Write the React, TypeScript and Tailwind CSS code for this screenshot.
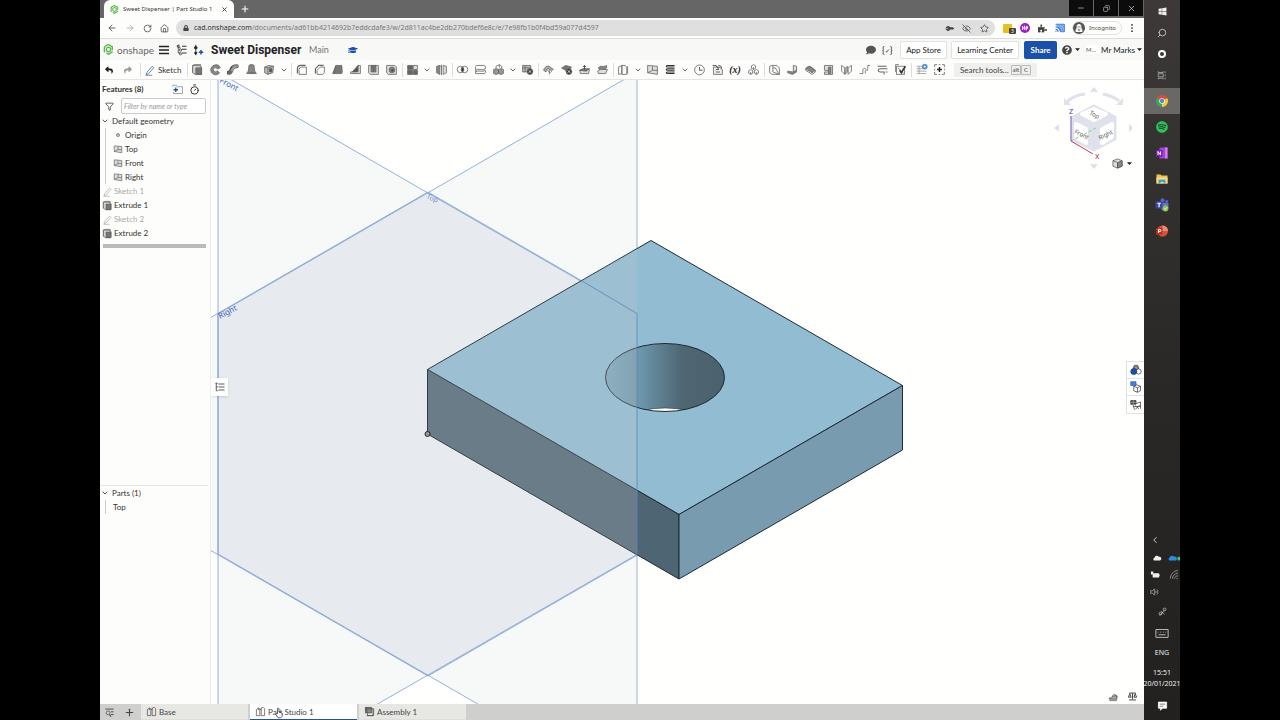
import type { ReactNode } from 'react'
import {
  ArrowLeft,
  ArrowRight,
  ChevronDown,
  ChevronLeft,
  Copy,
  EyeOff,
  Funnel,
  House,
  Minus,
  Plus,
  RotateCw,
  Search,
  Star,
  Timer,
  X,
} from 'lucide-react'
import {
  FaComment,
  FaGraduationCap,
  FaKey,
  FaLock,
  FaPuzzlePiece,
  FaQuestionCircle,
  FaReply,
  FaShare,
  FaSpotify,
  FaUserSecret,
  FaWindows,
} from 'react-icons/fa'

const URL_PATH =
  '/documents/ad61bb4214692b7eddcdafe3/w/2d811ac4be2db270bdef6e8c/e/7e98fb1b0f4bd59a077d4597'

// Glyphs are drawn on a 16x16 grid
const GLYPHS: Record<string, ReactNode> = {
  extrude: (
    <>
      <path d="M2 12V3l2-1h8v2" />
      <path d="M2 3h8l3 2v9H5l-3-2z" fill="#d4d4d4" />
      <path d="M6 6h7v8H6z" fill="#777" />
    </>
  ),
  revolve: (
    <>
      <path d="M13 5A6 6 0 1 0 13 12L10 9.500A2.500 2.500 0 1 1 10 7z" fill="#8a8a8a" />
      <path d="M8 2a6 6 0 0 1 6 4l-4 1" />
    </>
  ),
  sweep: (
    <>
      <path d="M2 12c4-1 3-3 4-5s3-3 6-3" stroke="#555" strokeWidth="5" strokeLinecap="round" />
      <path d="M3 12c3-1 3-3 4-5s3-3 5-3" stroke="#999" strokeWidth="3" strokeLinecap="round" />
      <circle cx="3.500" cy="11.500" r="2" fill="#666" />
    </>
  ),
  loft: (
    <>
      <path d="M5 3h6l1 7 2 3H2l2-3z" fill="#888" />
      <path d="M4 12h8M5 3l1-1h4l1 1" />
    </>
  ),
  thicken: (
    <>
      <path d="M2 5l5-2 6 1-1 8-6 2-4-2z" fill="#bbb" />
      <path d="M2 5l4 1v8M6 6l7-2" />
      <path d="M8 7h3v4H8z" fill="#555" />
    </>
  ),
  fillet: (
    <>
      <path d="M3 13V7a4 4 0 0 1 4-4h6" strokeWidth="1.500" />
      <path d="M5 14V8a3 3 0 0 1 3-3h6v9z" />
    </>
  ),
  chamfer: (
    <>
      <path d="M3 13V7l4-4h6" strokeWidth="1.500" />
      <path d="M5 14V9l4-4h5v7l-2 2z" />
    </>
  ),
  draft: (
    <>
      <path d="M6 3h7v10H2z" fill="#777" />
      <path d="M6 3L4 13M13 3l1 8-1 2" />
    </>
  ),
  rib: (
    <>
      <path d="M2 13h12V3h-3v7l-9 1z" fill="#ddd" />
      <path d="M4 11l7-8v8z" fill="#555" />
    </>
  ),
  shell: (
    <>
      <path d="M2 3h12v11H4l-2-2z" fill="#ddd" />
      <path d="M5 3v8h6V3z" fill="#777" />
      <path d="M8 3v8" />
    </>
  ),
  hole: (
    <>
      <path d="M2 3h10l2 2v9H4l-2-2z" fill="#ddd" />
      <circle cx="8.500" cy="8.500" r="3.500" fill="#888" />
      <circle cx="9" cy="9" r="1.500" fill="#444" />
    </>
  ),
  pattern: (
    <>
      <path d="M2 3h6v5H2zM2 9h6v5H2zM9 9h5v5H9z" fill="#666" />
      <path d="M9 3h5v5H9z" fill="#ddd" />
    </>
  ),
  mirror: (
    <>
      <path d="M2 4l4-1v11l-4-2z" fill="#888" />
      <path d="M10 3l4 1v8l-4 2z" fill="#ddd" />
      <path d="M8 2v13M6 3l2 2" />
    </>
  ),
  boolean: (
    <>
      <circle cx="5.500" cy="8" r="4" />
      <circle cx="10.500" cy="8" r="4" />
      <path d="M8 5a4 4 0 0 1 0 6 4 4 0 0 1 0-6z" fill="#333" />
    </>
  ),
  split: (
    <>
      <path d="M2 4l1-1h9l2 1v3M2 4v5c3-3 8 1 12-2M2 9v4h11l1-1V9c-4 3-9-1-12 2" />
    </>
  ),
  transform: (
    <>
      <path d="M2 8l3-1 3 1v5l-3 1-3-1zM8 8l3-1 3 1v5l-3 1-3-1z" fill="#999" />
      <path d="M5 7V4l4-2 3 2v3M9 2v4" />
    </>
  ),
  deletePart: (
    <>
      <path d="M2 3h10v8H2z" fill="#bbb" />
      <path d="M2 6h10M5 3v8" />
      <circle cx="11" cy="10.500" r="3.500" fill="#333" />
      <path d="M9.500 9l3 3m0-3l-3 3" stroke="#fff" />
    </>
  ),
  modifyFillet: (
    <>
      <path d="M2 9c1-4 4-6 7-5l5 4-3 1-3-2c-2 0-3 2-3 4z" fill="#aaa" />
      <path d="M6 8l4 4 2-2M9 8v6" />
    </>
  ),
  deleteFace: (
    <>
      <path d="M2 6l5-3 7 2-4 6z" fill="#777" />
      <circle cx="11" cy="10.500" r="3.500" fill="#333" />
      <path d="M9.500 9l3 3m0-3l-3 3" stroke="#fff" />
    </>
  ),
  moveFace: (
    <>
      <path d="M2 9l4-1h8l-1 5H3z" fill="#ddd" />
      <path d="M2 9l4-2h8l-4 3z" fill="#777" />
      <path d="M8 8V3M6 5l2-2 2 2" stroke="#333" />
    </>
  ),
  replaceFace: (
    <>
      <path d="M2 10l3-2h9l-2 5H3z" fill="#ddd" />
      <path d="M3 6c3-4 6 0 10-3v3c-4 3-7-1-9 2z" fill="#888" />
    </>
  ),
  offset: (
    <>
      <path d="M2 5l4-2v10l-4 1z" />
      <path d="M6 3h4l2 3v8H6zM13 4v9" />
    </>
  ),
  plane: (
    <>
      <path d="M2 3l12 1v10L2 12z" fill="#ddd" />
      <path d="M8 4v5h6M2 12l6-3" />
    </>
  ),
  helix: (
    <>
      <path d="M13 3H5c-3 0-3 2 0 2h8M13 7H5c-3 0-3 2 0 2h8M13 11H5c-3 0-3 2 0 2h8" strokeWidth="1.300" stroke="#333" />
    </>
  ),
  history: (
    <>
      <circle cx="8" cy="8.500" r="6" />
      <path d="M8 5v4h4" strokeWidth="1.300" />
    </>
  ),
  derived: (
    <>
      <path d="M3 5h7l4 3v6H3z" fill="#eee" />
      <path d="M2 3h4l3 4M6 8h3V5M9 3a4 4 0 0 1 4 4M6 11h5" strokeWidth="1.300" />
    </>
  ),
  config: (
    <>
      <path d="M8 2l2.500 1.500v3L8 8 5.500 6.500v-3zM4.500 8L7 9.500v3L4.500 14 2 12.500v-3zM11.500 8L14 9.500v3L11.500 14 9 12.500v-3z" />
      <path d="M8 5v3M4.500 11v3M11.500 11v3" />
    </>
  ),
  sheet: (
    <>
      <path d="M2 4l3-1h6l3 3v8H5l-3-2zM6 3v8l8 3M6 6h3l4 7" />
    </>
  ),
  flange: (
    <>
      <path d="M2 10l6 1 5-3v3l-5 3-6-2z" fill="#888" />
      <path d="M9 3l4 1v5l-4 2z" fill="#ddd" />
    </>
  ),
  hem: (
    <>
      <path d="M2 7l5-3 7 5-4 3z" fill="#888" />
      <path d="M3 6c2-4 8 0 10 3M2 7v2l8 5 4-3V9" />
    </>
  ),
  tab: (
    <>
      <path d="M3 3h10v11H3v-3h5V9H3z" fill="#ddd" />
      <path d="M8 5h3v8H8z" fill="#888" />
    </>
  ),
  joint: (
    <>
      <path d="M2 3l4 3v8L2 10zM14 3l-4 3v8l4-4z" />
      <path d="M6 7l3-3v7l-3 3z" fill="#bbb" />
    </>
  ),
  corner: <path d="M2 13h4V9c0-3 3-3 4-1s2 2 2-1V3h3M9 13V9" />,
  bend: <path d="M2 4h11M14 7H5c-3 0-3 4 0 4h5v3M12 11h2" strokeWidth="1.300" />,
  finish: (
    <>
      <path d="M3 4h10v10H3zM6 2H2v9M5 6l7 7" />
      <path d="M7 9l2 3 5-8" strokeWidth="2" stroke="#333" />
    </>
  ),
  custom: (
    <>
      <path d="M2 4h7M2 7h8M2 10h12M2 13h12M5 4v9" stroke="#999" />
      <circle cx="12" cy="4.500" r="3" fill="#4b83c9" stroke="#4b83c9" />
      <path d="M12 3v3m-1.500-1.500h3" stroke="#fff" />
    </>
  ),
  addFeature: (
    <>
      <path d="M2 5V2h3M7 2h2M11 2h3v3M14 7v2M14 11v3h-3M9 14H7M5 14H2v-3M2 9V7" />
      <path d="M8 5v6M5 8h6" stroke="#222" strokeWidth="1.800" />
    </>
  ),
  tree: (
    <>
      <path d="M3 2v10h3M3 5h3M2 3l2-2" />
      <path d="M8 3h6M8 7h6M8 12h6" strokeWidth="1.500" />
      <circle cx="3" cy="3" r="1.500" />
      <circle cx="6" cy="8" r="1.500" />
      <circle cx="6" cy="13" r="1.500" />
    </>
  ),
  version: (
    <>
      <path d="M5 1v14" stroke="#222" />
      <circle cx="5" cy="5" r="1.800" fill="#222" />
      <circle cx="5" cy="12" r="1.500" fill="#222" />
      <path d="M12 8v6m-3-3h6" stroke="#1b50a8" strokeWidth="2" />
    </>
  ),
  partStudio: (
    <>
      <path d="M2 5l3-2 2 1v10H2zM7 5h2M9 3l3-1 2 2v10H9z" />
      <path d="M5 3v3" />
    </>
  ),
  assembly: (
    <>
      <path d="M2 2h9v8H2z" fill="#888" />
      <path d="M2 4h9M4 2v8M13 4v10H4" />
      <path d="M11 4h3v10H5v-4" />
    </>
  ),
  tabManager: (
    <>
      <path d="M2 3h12M10 7h4M10 11h4M2 6v0" strokeWidth="1.300" />
      <circle cx="6" cy="8.500" r="2.800" />
      <path d="M8 11l2 3" strokeWidth="1.500" />
    </>
  ),
  panel: (
    <path d="M2 3h3M3 3v10M6 4h8M6 8h8M6 12h8M3 8h2M3 13h2" strokeWidth="1.300" />
  ),
  pen: <path d="M4 11l7-8 2 2-7 8-3 1zM2 15h9" />,
  folder: (
    <>
      <path d="M1 5V3h5l1 2h7v9H2v-2" stroke="#888" />
      <path d="M5 6v6M2 9h6" stroke="#1b50a8" strokeWidth="1.800" />
    </>
  ),
  balls: (
    <>
      <circle cx="8" cy="5" r="3.500" fill="#888" />
      <circle cx="11.500" cy="10" r="3.500" fill="#fff" />
      <circle cx="5" cy="10" r="4" fill="#1b4fa8" stroke="#173f86" />
    </>
  ),
  cubeTable: (
    <>
      <path d="M9 5l5 2v6l-4 2-5-2V7zM5 7l5 2v6M10 9l4-2" fill="#fff" />
      <path d="M1 1h7v5H1z" fill="#4a7fd0" stroke="#2e63b5" />
    </>
  ),
  gridTable: (
    <>
      <path d="M8 6l6-2v9M4 8l2 6M7 9l5 4M13 8l-6 6M4 10h10" />
      <path d="M1 2h7v5H1z" fill="#444" />
      <path d="M1 4.500h7M4.500 2v5" stroke="#aaa" />
    </>
  ),
  caliper: (
    <>
      <path d="M2 12h11V7H8L5 10H2z" fill="#aaa" />
      <path d="M6 9c0-5 7-5 7 0M2 14h11" />
    </>
  ),
  scale: (
    <path d="M3 3h10M8 3v9M2 9h4L4 4zM10 9h4l-2-5zM3 13h10" strokeWidth="1.300" />
  ),
  connector: (
    <>
      <path d="M3 13c5 0 4-5 8-7M6 8l5 4" />
      <circle cx="11" cy="5" r="2" />
      <circle cx="5" cy="11" r="2" />
    </>
  ),
  keyboard: (
    <path d="M1 4h14v9H1zM3 7h1m2 0h1m2 0h1m2 0h1M4 10h8" />
  ),
  volume: (
    <path d="M1 6h3l3-3v10l-3-3H1zM9 6c1 1 1 3 0 4M11 4c2 2 2 6 0 8" />
  ),
  wifi: (
    <path d="M2 14C2 8 6 3 13 2M5 14c0-4 3-7 8-8M8 14c0-2 2-4 5-4M11 14h2" />
  ),
  note: (
    <>
      <path d="M2 3h12v9H8l-3 3v-3H2z" fill="#fff" stroke="#fff" />
      <path d="M4 6h8M4 9h5" stroke="#444" />
    </>
  ),
  taskView: <path d="M2 2v2h8V2M2 6h8v5H2zM2 15v-2h8v2M13 2v3M13 7v3M13 12v3" />,
}

function Glyph({ name, className = 'size-3.5 text-[#555]' }: { name: string; className?: string }) {
  return (
    <svg viewBox="0 0 16 16" fill="none" stroke="currentColor" strokeWidth="1" className={`shrink-0 ${className}`}>
      {GLYPHS[name]}
    </svg>
  )
}

const TOOL_GROUPS = [
  ['extrude', 'revolve', 'sweep', 'loft', 'thicken', 'more'],
  ['fillet', 'chamfer', 'draft', 'rib', 'shell', 'hole'],
  ['pattern', 'more', 'mirror'],
  ['boolean', 'split', 'transform', 'more', 'deletePart'],
  ['modifyFillet', 'deleteFace', 'moveFace', 'replaceFace'],
  ['offset', 'more', 'plane', 'helix', 'more', 'history', 'derived', 'variable', 'config'],
  ['sheet', 'flange', 'hem', 'tab', 'joint', 'corner', 'bend', 'finish'],
  ['custom', 'addFeature'],
]

function OnshapeLogo({ className }: { className: string }) {
  return (
    <svg viewBox="0 0 16 16" fill="none" stroke="#57b947" className={`shrink-0 ${className}`}>
      <path d="M4 2.500L8 1l5.500 3v5M14 11l-6 4-3-2M3 12l-1-1V5l2-2.500" strokeWidth="2" />
      <path d="M8 4.500L11 6v4l-3 1.500L5 10V6z" strokeWidth="1.800" />
    </svg>
  )
}

function Caret() {
  return (
    <svg viewBox="0 0 8 8" className="size-[5px] shrink-0" fill="#222">
      <path d="M0 2h8L4 6.500z" />
    </svg>
  )
}

function TabStrip() {
  return (
    <div className="flex h-[18px] items-stretch bg-[#666] pl-1">
      <div className="flex w-[130px] items-center rounded-t-md bg-[#fdfefb] pr-1.5 pl-1.5 text-[#333]">
        <OnshapeLogo className="size-[9px]" />
        <span className="ml-1 flex-1 text-[6px] whitespace-nowrap">Sweet Dispenser | Part Studio 1</span>
        <button aria-label="Close tab">
          <X size={7} strokeWidth={3} />
        </button>
      </div>
      <button aria-label="New tab" className="ml-1.5 text-white">
        <Plus size={10} strokeWidth={2.5} />
      </button>
      <div className="mr-px ml-auto flex h-4 gap-px text-[#ccc]">
        <button aria-label="Minimise" className="flex w-6 items-center justify-center bg-[#0c0c0c]">
          <Minus size={8} />
        </button>
        <button aria-label="Restore" className="flex w-6 items-center justify-center bg-[#0c0c0c]">
          <Copy size={7} className="-scale-x-100" />
        </button>
        <button aria-label="Close" className="flex w-6 items-center justify-center bg-[#0c0c0c]">
          <X size={9} />
        </button>
      </div>
    </div>
  )
}

function AddressBar() {
  return (
    <div className="flex h-[21px] items-center border-b border-[#dcdcda] bg-[#fdfefb] pr-2.5 pl-[7px] text-[#444]">
      <div className="flex w-[69px] gap-2">
        <button aria-label="Back"><ArrowLeft size={10} /></button>
        <button aria-label="Forward" className="text-[#aaa]"><ArrowRight size={10} /></button>
        <button aria-label="Reload"><RotateCw size={9} /></button>
        <button aria-label="Home"><House size={9} /></button>
      </div>
      <div className="flex h-4 min-w-0 flex-1 items-center rounded-full bg-[#dfdfdf] pr-1.5 pl-[7px]">
        <FaLock size={6} />
        <span className="ml-[5px] flex-1 text-[7px] whitespace-nowrap text-[#777]">
          <span className="text-[#333]">cad.onshape.com</span>
          {URL_PATH}
        </span>
        <div className="flex items-center gap-[9px]">
          <FaKey size={7} className="-rotate-[135deg]" />
          <EyeOff size={9} />
          <Star size={9} />
        </div>
      </div>
      <div className="ml-2 flex items-center gap-2">
        <div className="relative size-[9px] rounded-[1px] bg-[#e2c320]">
          <span className="absolute top-1 left-1.5 rounded-[1px] bg-[#444] px-0.5 text-[5px] leading-[6px] text-white">3</span>
        </div>
        <svg viewBox="0 0 16 16" className="size-[10px]">
          <circle cx="8" cy="8" r="8" fill="#9b1fc1" />
          <path d="M4 5v6M7 4v7M10 5v7M4 8h8M12 5v4" stroke="#fff" strokeWidth="1.500" />
        </svg>
        <FaPuzzlePiece size={9} />
        <svg viewBox="0 0 16 16" className="size-[10px]" fill="none" stroke="#3f7fdf">
          <path d="M1 2h14v12H9" fill="#7fabeb" strokeWidth="1.500" />
          <path d="M1 6a8 8 0 0 1 8 8M1 10a4 4 0 0 1 4 4M1 13l1 1" strokeWidth="2" />
        </svg>
      </div>
      <div className="ml-[7px] flex h-3.5 items-center gap-1 rounded-full border border-[#e2e2e0] pr-1 text-[6px]">
        <span className="flex size-3 items-center justify-center rounded-full bg-[#555] text-white">
          <FaUserSecret size={8} />
        </span>
        <span className="w-7">Incognito</span>
      </div>
      <svg viewBox="0 0 4 16" className="ml-2 h-2.5 w-1" fill="#333">
        <circle cx="2" cy="3" r="1.400" />
        <circle cx="2" cy="8" r="1.400" />
        <circle cx="2" cy="13" r="1.400" />
      </svg>
    </div>
  )
}

function DocumentHeader() {
  return (
    <header className="flex h-[21px] items-center bg-[#f8f9f7] pr-0.5 pl-[3px] text-[#222]">
      <OnshapeLogo className="size-[11px]" />
      <span className="ml-[3px] w-[42px] text-[10px] leading-3 text-[#666]">onshape</span>
      <button aria-label="Menu" className="flex w-[17px] justify-start">
        <svg viewBox="0 0 10 10" className="size-[10px]" stroke="#222" strokeWidth="1.500">
          <path d="M0 1.500h10M0 5h10M0 8.500h10" />
        </svg>
      </button>
      <button aria-label="Versions" className="w-4"><Glyph name="tree" className="size-3 text-[#333]" /></button>
      <button aria-label="Create version" className="w-[19px]"><Glyph name="version" className="size-3" /></button>
      <h1 className="w-[93px] font-['Roboto',sans-serif] text-[12px] font-bold whitespace-nowrap">Sweet Dispenser</h1>
      <span className="ml-[5px] w-[39px] text-[9px] text-[#777]">Main</span>
      <FaGraduationCap size={10} className="text-[#1b50a8]" />
      <div className="ml-auto flex items-center text-[8px] whitespace-nowrap">
        <FaComment size={10} className="text-[#555]" />
        <span className="ml-1.5 w-3.5 text-[9px]">{'{'}<span className="text-[6px]">✓</span>{'}'}</span>
        <button className="ml-1 h-[18px] w-[47px] rounded-[2px] border border-[#e2e2e0] bg-white">App Store</button>
        <button className="ml-1 h-[18px] w-[68px] rounded-[2px] border border-[#e2e2e0] bg-white">Learning Center</button>
        <button className="ml-[5px] h-[18px] w-[33px] rounded-[2px] bg-[#1b50a8] font-bold text-white">Share</button>
        <button aria-label="Help" className="ml-[5px] flex items-center gap-[3px]">
          <FaQuestionCircle size={10} className="text-[#444]" />
          <Caret />
        </button>
        <span className="ml-1.5 w-[14px] bg-white text-[6px] text-[#555]">M...</span>
        <button className="ml-px flex items-center gap-0.5">Mr Marks <Caret /></button>
      </div>
    </header>
  )
}

function Tool({ name }: { name: string }) {
  if (name === 'more') {
    return (
      <button aria-label="More" className="flex w-[11px] justify-center text-[#444]">
        <ChevronDown size={8} strokeWidth={2.5} />
      </button>
    )
  }
  return (
    <button aria-label={name} className="flex w-[18px] justify-center">
      {name === 'variable' ? (
        <span className="font-['Liberation_Serif',serif] text-[10px] leading-3 font-bold text-[#222] italic">(x)</span>
      ) : (
        <Glyph name={name} className="size-[13px] text-[#666]" />
      )}
    </button>
  )
}

function Toolbar() {
  return (
    <div className="flex h-5 items-center border-b border-[#e4e5e2] bg-[#fdfefb]">
      <div className="flex h-3.5 w-10 items-center gap-[11px] pl-[5px]">
        <button aria-label="Undo"><FaReply size={8} className="text-[#222]" /></button>
        <button aria-label="Redo"><FaShare size={8} className="text-[#999]" /></button>
      </div>
      <button className="flex h-3.5 w-[47px] items-center gap-0.5 border-l border-[#ddd] pl-[3px] text-[8px] text-[#333]">
        <Glyph name="pen" className="size-3 text-[#3b5f95]" />
        Sketch
      </button>
      {TOOL_GROUPS.map((group, i) => (
        <div key={i} className="flex h-3.5 items-center border-l border-[#ddd] pr-0.5">
          {group.map((name, j) => (
            <Tool key={j} name={name} />
          ))}
        </div>
      ))}
      <button className="ml-1 flex h-3.5 items-center bg-[#eff0ed] px-1.5 text-[8px] whitespace-nowrap text-[#444]">
        Search tools...
        <kbd className="ml-0.5 rounded-[1px] border border-[#bbb] px-px font-[inherit] text-[6px] leading-[8px]">alt</kbd>
        <kbd className="rounded-[1px] border border-[#bbb] px-0.5 font-[inherit] text-[6px] leading-[8px]">C</kbd>
      </button>
    </div>
  )
}

const PLANES = ['Top', 'Front', 'Right']

const FEATURES = [
  { label: 'Sketch 1', icon: 'pen', hidden: true },
  { label: 'Extrude 1', icon: 'extrude', hidden: false },
  { label: 'Sketch 2', icon: 'pen', hidden: true },
  { label: 'Extrude 2', icon: 'extrude', hidden: false },
]

function FeatureList() {
  return (
    <aside className="flex w-[111px] shrink-0 flex-col border-r border-[#eceeec] bg-[#fdfefb] text-[8px] text-[#333]">
      <div className="flex h-[18px] items-center pl-0.5">
        <h2 className="w-[70px] text-[8px] font-bold">Features (8)</h2>
        <button aria-label="New folder"><Glyph name="folder" className="size-3" /></button>
        <button aria-label="Timing" className="ml-[5px] text-[#222]"><Timer size={11} /></button>
      </div>
      <div className="flex h-4 items-center gap-[7px] pr-1 pl-[5px]">
        <Funnel size={9} className="shrink-0" />
        <input
          aria-label="Filter features"
          placeholder="Filter by name or type"
          className="h-4 w-full min-w-0 rounded-[2px] border border-[#ccc] bg-white px-0.5 text-[7px] italic placeholder:text-[#999]"
        />
      </div>
      <button className="flex h-3.5 items-center gap-[3px] pl-[1px]">
        <ChevronDown size={8} strokeWidth={2.5} />
        Default geometry
      </button>
      <ul className="ml-[5px] border-l border-[#ccc] pl-[7px]">
        <li className="flex h-3.5 items-center gap-0.5">
          <span className="flex w-[10px] justify-center">
            <i className="size-1 rounded-full border border-[#888] bg-[#ccc]" />
          </span>
          Origin
        </li>
        {PLANES.map(name => (
          <li key={name} className="flex h-3.5 items-center gap-0.5">
            <Glyph name="plane" className="size-[10px] text-[#555]" />
            {name}
          </li>
        ))}
      </ul>
      <ul className="pl-0.5">
        {FEATURES.map(({ label, icon, hidden }) => (
          <li key={label} className={`flex h-3.5 items-center gap-px ${hidden ? 'text-[#aaa]' : ''}`}>
            <Glyph name={icon} className={hidden ? 'size-[11px] text-[#aaa]' : 'size-[11px] text-[#555]'} />
            {label}
          </li>
        ))}
      </ul>
      <div className="mt-1 mr-1 ml-[3px] h-1 bg-[#bbb]" />
      <section className="mt-auto mr-0.5 h-[219px] border-t border-[#e4e5e2]">
        <button className="flex h-3.5 items-center gap-[3px] pl-[1px]">
          <ChevronDown size={8} strokeWidth={2.5} />
          Parts (1)
        </button>
        <p className="ml-[5px] flex h-3.5 items-center border-l border-[#ccc] pl-[7px]">Top</p>
      </section>
    </aside>
  )
}

function ViewCube() {
  return (
    <svg viewBox="0 0 80 84" className="absolute top-1.5 right-3 h-[84px] w-20">
      <g fill="none" stroke="#dfe2ea" strokeWidth="3">
        <path d="M15 16Q22 9 33 8" />
        <path d="M51 8Q61 10 67 15" />
      </g>
      <g fill="#dfe2ea">
        <path d="M38 6h8l-4-5zM38 78h8l-4 5zM7 38v8l-5-4zM77 38v8l5-4z" />
        <path d="M12 12v7h7zM71 12v7h-7z" />
        <path d="M42 20l21 11v22L42 64 21 54V31z" stroke="#dfe2ea" strokeWidth="3" strokeLinejoin="round" />
      </g>
      <g fill="#fff" stroke="#fff" strokeWidth="4" strokeLinejoin="round">
        <path d="M42 23l12 5-12 6-12-6z" />
        <path d="M24 38l10 5v14l-10-6z" />
        <path d="M60 38l-10 5v14l10-6z" />
      </g>
      <g className="font-['Noto_Sans',sans-serif]" fontSize="6" fill="#555">
        <text transform="translate(37 28) rotate(30)">Top</text>
        <text transform="translate(22 47) rotate(26)">Front</text>
        <text transform="translate(48 54) rotate(-27)">Right</text>
      </g>
      <path d="M19 55L44 42" stroke="#83cf8b" strokeDasharray="3 2" />
      <path d="M19 55V30" stroke="#5a50d0" />
      <path d="M19 55l22 13" stroke="#c8385a" />
      <text x="17" y="28" fontSize="7" fill="#3c36c8" className="font-['Roboto',sans-serif]">Z</text>
      <text x="43" y="73" fontSize="7" fill="#c8284a" className="font-['Roboto',sans-serif]">X</text>
    </svg>
  )
}

const PART_OUTLINE = 'M427.500 369.500L651 240.500 902.500 385.500V450L679 579 427.500 434z'

function Model() {
  return (
    <svg viewBox="211 80 933 624" preserveAspectRatio="xMinYMin slice" className="absolute inset-0 size-full">
      <defs>
        <linearGradient id="bore" x1="0" x2="1" y1="0" y2="0">
          <stop offset="0" stopColor="#7ea7bb" />
          <stop offset="0.3" stopColor="#6b95a9" />
          <stop offset="0.64" stopColor="#4f6673" />
          <stop offset="1" stopColor="#4b616d" />
        </linearGradient>
        <clipPath id="partClip">
          <path d={PART_OUTLINE} />
        </clipPath>
        <clipPath id="boreClip">
          <ellipse cx="665" cy="377.500" rx="59.500" ry="34" />
        </clipPath>
      </defs>

      {/* reference planes */}
      <g fill="#7090ac" fillOpacity="0.06" stroke="#7d9fd2" strokeOpacity="0.8" strokeWidth="1">
        <path d="M218 72L637 313.500V796L218 554z" />
        <path d="M218 314L637 72V554.500L218 796z" />
        <path d="M428 192L847 434 428 676 9 434z" />
      </g>

      {/* part */}
      <g stroke="#1d2b35" strokeWidth="1" strokeLinejoin="round">
        <path d="M427.500 369.500L651 240.500 902.500 385.500 679 514.500z" fill="#91bcd2" />
        <path d="M427.500 369.500L679 514.500V579L427.500 434z" fill="#4e6573" />
        <path d="M902.500 385.500L679 514.500V579L902.500 450z" fill="#789bb0" />
        <ellipse cx="665" cy="377.500" rx="59.500" ry="34" fill="url(#bore)" stroke="none" />
        <ellipse cx="665" cy="442" rx="59.500" ry="34" fill="#fffffd" strokeWidth="0.500" clipPath="url(#boreClip)" />
        <ellipse cx="665" cy="377.500" rx="59.500" ry="34" fill="none" />
      </g>
      <path d="M211 79H637V704H211z" fill="#c2c9d0" fillOpacity="0.23" clipPath="url(#partClip)" />
      <path d="M582 281L637 313.500V555" fill="none" stroke="#5d88b8" strokeOpacity="0.8" />
      <circle cx="427.500" cy="434" r="2.500" fill="#999" stroke="#222" />

      <g className="font-['Noto_Sans',sans-serif]" fontSize="8" fill="#4166c0">
        <text transform="translate(219 82) rotate(28)">Front</text>
        <text transform="translate(426 198) rotate(24)" fontSize="7" fillOpacity="0.7">Top</text>
        <text transform="translate(220 319) rotate(-28)">Right</text>
      </g>
    </svg>
  )
}

function Viewport() {
  return (
    <main className="relative min-w-0 flex-1 overflow-hidden bg-[#fffffd]">
      <Model />
      <ViewCube />
      <button aria-label="View options" className="absolute top-[78px] right-3 flex items-center gap-1">
        <svg viewBox="0 0 12 12" className="size-[11px]" stroke="#555" strokeWidth="0.800">
          <path d="M1 3l5-2 5 2v6l-5 2-5-2z" fill="#ddd" />
          <path d="M6 5l5-2v6l-5 2z" fill="#888" />
          <path d="M1 3l5 2v6" fill="none" />
        </svg>
        <Caret />
      </button>
      <button aria-label="Collapse feature list" className="absolute top-[298px] left-0 flex h-[18px] w-[17px] items-center justify-center bg-white shadow-sm">
        <Glyph name="panel" className="size-3 text-[#555]" />
      </button>
      <div className="absolute top-[281px] right-0 flex w-[18px] flex-col divide-y divide-[#e2e2e0] border border-r-0 border-[#e2e2e0] bg-white">
        {['balls', 'cubeTable', 'gridTable'].map(name => (
          <button key={name} aria-label={name} className="flex h-[17px] items-center justify-center">
            <Glyph name={name} className="size-3 text-[#444]" />
          </button>
        ))}
      </div>
      <div className="absolute right-1.5 bottom-0.5 flex gap-2">
        <Glyph name="caliper" className="size-[11px] text-[#444]" />
        <Glyph name="scale" className="size-[11px] text-[#333]" />
      </div>
    </main>
  )
}

const DOC_TABS = [
  { label: 'Base', icon: 'partStudio', active: false },
  { label: 'Part Studio 1', icon: 'partStudio', active: true },
  { label: 'Assembly 1', icon: 'assembly', active: false },
]

function DocumentTabs() {
  return (
    <footer className="relative flex h-4 items-stretch bg-[#cfd0cd] text-[8px] text-[#444]">
      <div className="flex w-[41px] items-center gap-[9px] pl-1">
        <button aria-label="Tab manager"><Glyph name="tabManager" className="size-[11px] text-[#444]" /></button>
        <button aria-label="Insert tab"><Plus size={11} strokeWidth={2.5} /></button>
      </div>
      <nav className="flex gap-0.5">
        {DOC_TABS.map(({ label, icon, active }) => (
          <button
            key={label}
            className={`flex w-[107px] items-center gap-0.5 border-b pl-[5px] ${
              active ? 'border-[#2c4f9e] bg-white' : 'border-[#dededb] bg-[#e7e7e4]'
            }`}
          >
            <Glyph name={icon} className="size-[11px] text-[#444]" />
            {label}
          </button>
        ))}
      </nav>
      <svg viewBox="0 0 10 14" className="absolute top-[3px] left-[175px] h-3 w-2" fill="#fff" stroke="#333">
        <path d="M3 8V2c0-1.500 2-1.500 2 0v4l4 1v4l-2 2H4L1 9c0-1 1-1.500 2-1z" />
      </svg>
    </footer>
  )
}

function Taskbar() {
  return (
    <div className="flex w-9 shrink-0 flex-col items-stretch bg-linear-to-b from-[#3c3938] via-[#2a2928] to-[#222120] pt-px text-[7px] text-[#eee] *:flex *:shrink-0 *:items-center *:justify-center">
      <button aria-label="Start" className="h-[21px]"><FaWindows size={9} /></button>
      <button aria-label="Search" className="h-[21px]"><Search size={10} className="-scale-x-100 text-[#ccc]" /></button>
      <button aria-label="Cortana" className="h-[21px]"><span className="size-2 rounded-full border-2 border-white" /></button>
      <button aria-label="Task view" className="h-[21px]"><Glyph name="taskView" className="size-[10px] text-[#ccc]" /></button>
      <button aria-label="Chrome" className="mt-[3px] h-[26px] bg-[#6a6867]">
        <svg viewBox="0 0 24 24" className="size-3">
          <path d="M12 12L1.600 6A12 12 0 0 1 22.400 6z" fill="#e0483c" />
          <path d="M12 12L1.600 6A12 12 0 0 0 12 24z" fill="#3ba757" />
          <path d="M12 12l10.400-6A12 12 0 0 1 12 24z" fill="#f6c935" />
          <circle cx="12" cy="12" r="5.500" fill="#fff" />
          <circle cx="12" cy="12" r="4.300" fill="#4a86e8" />
        </svg>
      </button>
      <button aria-label="Spotify" className="h-[26px]"><FaSpotify size={12} className="text-[#27c658]" /></button>
      <button aria-label="OneNote" className="h-[26px]">
        <svg viewBox="0 0 24 24" className="size-3">
          <path d="M7 1h16v22H7z" fill="#a63fd6" />
          <path d="M18 1h5v22h-5z" fill="#d07df0" />
          <path d="M0 6h13v13H0z" fill="#7a1fb0" />
          <path d="M4 16V9l5 7V9" fill="none" stroke="#fff" strokeWidth="2" />
        </svg>
      </button>
      <button aria-label="Explorer" className="h-[26px]">
        <svg viewBox="0 0 24 24" className="size-3">
          <path d="M1 3h8l2 2h12v16H1z" fill="#eec14d" />
          <path d="M1 9h22v12H1z" fill="#f9df8b" />
          <path d="M5 21v-8h14v8h-4v-3H9v3z" fill="#4b9fc8" />
        </svg>
      </button>
      <button aria-label="Teams" className="h-[26px]">
        <svg viewBox="0 0 24 24" className="size-3.5">
          <circle cx="13" cy="4" r="3.500" fill="#5b62c4" />
          <circle cx="20" cy="6" r="2.500" fill="#5b62c4" />
          <path d="M9 8h14v8c0 6-12 8-13 1z" fill="#6970d0" />
          <path d="M1 6h12v12H1z" fill="#3d46a8" />
          <path d="M4 9h6M7 9v7" stroke="#fff" strokeWidth="2" />
          <circle cx="18" cy="18" r="5" fill="#8cc34a" />
          <path d="M15.500 18l2 2 3-4" fill="none" stroke="#fff" strokeWidth="1.500" />
        </svg>
      </button>
      <button aria-label="PowerPoint" className="h-[26px]">
        <svg viewBox="0 0 24 24" className="size-3">
          <circle cx="13" cy="12" r="11" fill="#d4533a" />
          <path d="M13 1a11 11 0 0 1 11 11H13z" fill="#f08a6c" />
          <path d="M0 6h13v13H0z" fill="#b8301c" />
          <path d="M5 16V9h3a2 2 0 0 1 0 4H5" fill="none" stroke="#fff" strokeWidth="2" />
        </svg>
      </button>

      <button aria-label="Show hidden icons" className="mt-auto h-[18px] pr-3.5"><ChevronLeft size={10} /></button>
      <div className="h-[17px] justify-end! gap-1.5 overflow-hidden">
        <svg viewBox="0 0 16 10" className="h-[6px] w-[10px] shrink-0" fill="#eee">
          <path d="M3 9a3 3 0 0 1 1-5 4 4 0 0 1 7-1 3 3 0 0 1 2 6z" />
        </svg>
        <svg viewBox="0 0 20 10" className="h-[6px] w-3 shrink-0" fill="#2b8fe0">
          <path d="M2 9a3 3 0 0 1 1-5 4 4 0 0 1 7-1 3 3 0 0 1 3 6z" />
          <path d="M16 3h4v6h-4z" fill="#3fc48a" />
        </svg>
      </div>
      <div className="h-[17px] justify-end! gap-[9px]">
        <svg viewBox="0 0 16 12" className="h-[7px] w-[10px]" fill="#eee">
          <path d="M4 4h11v7H4zM1 1h4v5H1zM15 6h1v3h-1z" />
        </svg>
        <Glyph name="wifi" className="size-[11px] text-[#bbb]" />
      </div>
      <div className="h-[17px] pr-3.5"><Glyph name="volume" className="size-[10px] text-[#ccc]" /></div>
      <div className="h-[22px]"><Glyph name="connector" className="size-[11px] text-[#ccc]" /></div>
      <div className="h-[21px]"><Glyph name="keyboard" className="size-[14px] text-[#ccc]" /></div>
      <div className="h-[21px]">ENG</div>
      <div className="h-[27px] flex-col leading-[11px]">
        <span>15:51</span>
        <span>20/01/2021</span>
      </div>
      <button aria-label="Notifications" className="h-[29px]"><Glyph name="note" className="size-[11px]" /></button>
    </div>
  )
}

export default function App() {
  return (
    <div className="flex h-screen overflow-hidden bg-black px-[100px] font-['Noto_Sans',sans-serif]">
      <div className="flex min-w-0 flex-1 flex-col">
        <TabStrip />
        <AddressBar />
        <div className="flex min-h-0 flex-1 flex-col font-['Lato',sans-serif]">
          <DocumentHeader />
          <Toolbar />
          <div className="flex min-h-0 flex-1">
            <FeatureList />
            <Viewport />
          </div>
          <DocumentTabs />
        </div>
      </div>
      <Taskbar />
    </div>
  )
}
